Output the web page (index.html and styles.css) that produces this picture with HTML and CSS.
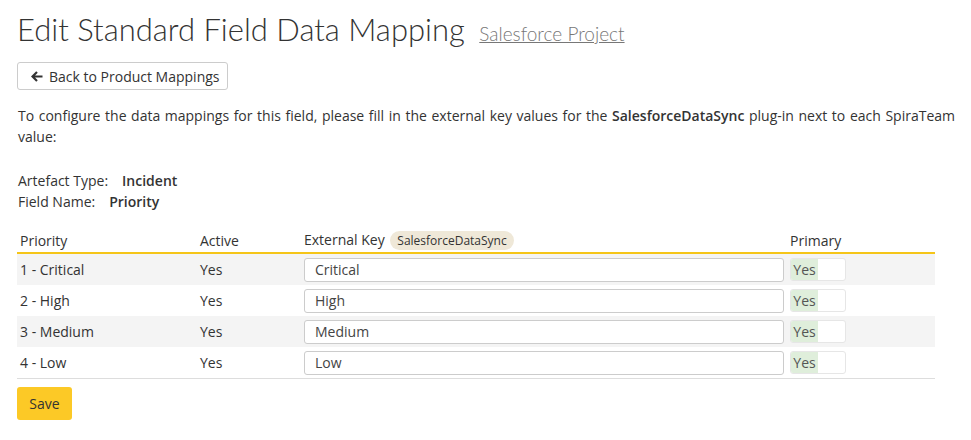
FILE: index.html
```html
<!DOCTYPE html>
<html>
<head>
<meta charset="utf-8">
<link rel="stylesheet" href="styles.css">
</head>
<body>
<div class="page">
  <h1 class="title">Edit Standard Field Data Mapping <a class="subtitle" href="#">Salesforce Project</a></h1>
  <button class="btn-back" type="button">
    <svg class="arrow" width="12" height="11" viewBox="0 0 12 11"><path d="M6 1 L1.5 5.5 L6 10 M1.5 5.5 H11.5" fill="none" stroke="#333" stroke-width="2.2"/></svg>
    <span>Back to Product Mappings</span>
  </button>
  <p class="intro">To configure the data mappings for this field, please fill in the external key values for the <b>SalesforceDataSync</b> plug-in next to each SpiraTeam value:</p>
  <div class="meta">
    <div class="meta-row"><span class="meta-label">Artefact Type:</span><span class="meta-value">Incident</span></div>
    <div class="meta-row"><span class="meta-label">Field Name:</span><span class="meta-value">Priority</span></div>
  </div>
  <table class="grid">
    <thead>
      <tr>
        <th class="c-priority">Priority</th>
        <th class="c-active">Active</th>
        <th class="c-key">External Key <span class="badge">SalesforceDataSync</span></th>
        <th class="c-primary">Primary</th>
      </tr>
    </thead>
    <tbody>
      <tr class="alt">
        <td class="c-priority">1 - Critical</td><td class="c-active">Yes</td>
        <td class="c-key"><input class="key-input" value="Critical"></td>
        <td class="c-primary"><span class="toggle"><span class="toggle-on">Yes</span></span></td>
      </tr>
      <tr>
        <td class="c-priority">2 - High</td><td class="c-active">Yes</td>
        <td class="c-key"><input class="key-input" value="High"></td>
        <td class="c-primary"><span class="toggle"><span class="toggle-on">Yes</span></span></td>
      </tr>
      <tr class="alt">
        <td class="c-priority">3 - Medium</td><td class="c-active">Yes</td>
        <td class="c-key"><input class="key-input" value="Medium"></td>
        <td class="c-primary"><span class="toggle"><span class="toggle-on">Yes</span></span></td>
      </tr>
      <tr>
        <td class="c-priority">4 - Low</td><td class="c-active">Yes</td>
        <td class="c-key"><input class="key-input" value="Low"></td>
        <td class="c-primary"><span class="toggle"><span class="toggle-on">Yes</span></span></td>
      </tr>
    </tbody>
  </table>
  <button class="btn-save" type="button">Save</button>
</div>
</body>
</html>
```
FILE: styles.css
```css
html, body {
  margin: 0;
  padding: 0;
  background: #fff;
}
body {
  font-family: "Open Sans", "Noto Sans", sans-serif;
  font-size: 14px;
  color: #333;
  font-variant-ligatures: none;
}
.page {
  padding: 0 16px 0 17px;
}
.title {
  margin: 0;
  padding-top: 9px;
  font-family: Lato, sans-serif;
  font-weight: 300;
  font-size: 31px;
  line-height: 40px;
  color: #333;
  white-space: nowrap;
}
.subtitle {
  font-size: 19px;
  color: #777;
  text-decoration: underline;
  margin-left: 6px;
}
.btn-back {
  margin-top: 8px;
  display: inline-flex;
  align-items: center;
  gap: 6px;
  height: 28px;
  width: 211px;
  padding: 0 12px 0 13px;
  border: 1px solid #ccc;
  border-radius: 3px;
  background: #fff;
  font-family: inherit;
  font-size: 14px;
  color: #333;
  white-space: nowrap;
}
.arrow {
  flex-shrink: 0;
  display: block;
}
.intro {
  margin: 15px 0 0 1px;
  line-height: 21px;
  text-align: justify;
}
.intro b {
  font-weight: 600;
}
.meta {
  margin-top: 23px;
  margin-left: 1px;
}
.meta-row {
  line-height: 21px;
}
.meta-label {
  margin-right: 14px;
}
.meta-value {
  font-weight: 600;
}
.grid {
  margin-top: 16px;
  width: 918px;
  border-collapse: collapse;
}
.grid th {
  text-align: left;
  font-weight: 400;
  height: 24px;
  padding: 0 3px;
  vertical-align: middle;
  border-bottom: 2px solid #f5c518;
}
.grid td {
  height: 31px;
  padding: 0 3px;
  vertical-align: middle;
}
.grid tr.alt td {
  background: #f4f4f4;
}
.grid tbody tr:last-child td {
  border-bottom: 1px solid #ddd;
}
.c-priority { width: 174px; }
.c-active { width: 98px; }
.c-key { width: 480px; }
.badge {
  display: inline-block;
  background: #efe8d8;
  border-radius: 10px;
  padding: 0 7px;
  font-size: 12px;
  line-height: 19px;
  margin-left: 2px;
}
.key-input {
  box-sizing: border-box;
  width: 480px;
  height: 24px;
  border: 1px solid #ccc;
  border-radius: 3px;
  padding: 0 10px;
  font-family: inherit;
  font-size: 14px;
  color: #444;
  background: #fff;
  display: block;
}
.toggle {
  display: flex;
  width: 56px;
  height: 23px;
  box-sizing: border-box;
  border: 1px solid #e6e6e6;
  border-radius: 3px;
  background: #fff;
  overflow: hidden;
}
.toggle-on {
  width: 27px;
  background: #dfeedb;
  color: #555;
  text-align: center;
  line-height: 21px;
}
.btn-save {
  margin-top: 8px;
  width: 55px;
  height: 33px;
  border: none;
  border-radius: 3px;
  background: #fcc926;
  font-family: inherit;
  font-size: 14px;
  color: #333;
}
```
